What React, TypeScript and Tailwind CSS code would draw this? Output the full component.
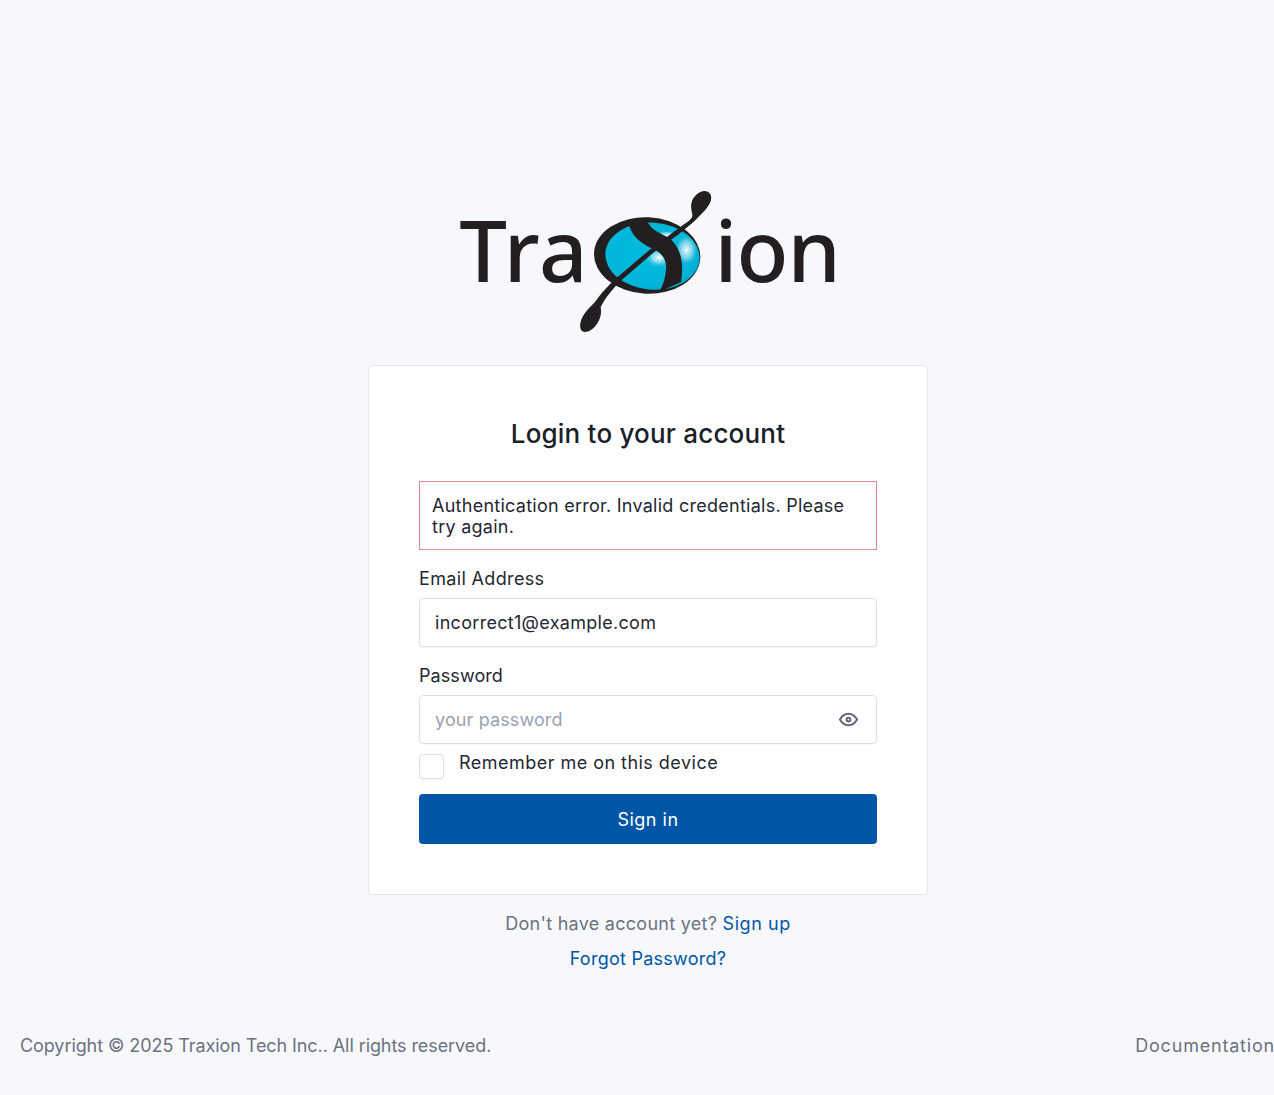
import { TbEye } from "react-icons/tb";

function LogoMark() {
  return (
    <svg viewBox="30 15 400 430" className="-ml-[9px] h-[143px] w-[133px] shrink-0" aria-hidden="true">
      <defs>
        <radialGradient id="globeBase" cx="45%" cy="45%" r="70%">
          <stop offset="0%" stopColor="#00bbdd" />
          <stop offset="70%" stopColor="#00b5d8" />
          <stop offset="100%" stopColor="#0a8fb5" />
        </radialGradient>
        <radialGradient id="shineCenter">
          <stop offset="0%" stopColor="#ffffff" />
          <stop offset="45%" stopColor="#a5e6f2" stopOpacity="0.75" />
          <stop offset="100%" stopColor="#00bbdd" stopOpacity="0" />
        </radialGradient>
        <radialGradient id="shineRight">
          <stop offset="0%" stopColor="#f4fcfe" />
          <stop offset="55%" stopColor="#9adfee" stopOpacity="0.7" />
          <stop offset="100%" stopColor="#19a9cc" stopOpacity="0" />
        </radialGradient>
        <clipPath id="globeClip">
          <ellipse cx="248" cy="214" rx="142" ry="101" transform="rotate(4 248 214)" />
        </clipPath>
      </defs>
      <ellipse cx="232" cy="212" rx="160" ry="115" transform="rotate(3 232 212)" fill="#231f20" />
      <ellipse cx="248" cy="214" rx="142" ry="101" transform="rotate(4 248 214)" fill="url(#globeBase)" />
      <g clipPath="url(#globeClip)">
        <ellipse cx="268" cy="218" rx="48" ry="32" fill="url(#shineCenter)" />
        <ellipse cx="350" cy="195" rx="36" ry="48" fill="url(#shineRight)" />
        <ellipse cx="292" cy="152" rx="36" ry="16" fill="url(#shineRight)" />
      </g>
      <path
        d="M178 122 C190 165 228 182 252 193 C278 206 291 226 289 252 C287 280 279 303 268 322 L334 292 C342 240 336 192 302 162 C276 146 245 138 232 108 Z"
        fill="#231f20"
      />
      <path
        d="M365 55 C372 25 405 8 420 25 C435 45 410 72 392 90 C382 100 378 106 366 116 L322 152 L250 204 L150 290 C130 312 104 340 92 368 C100 400 72 442 45 442 C25 442 26 410 45 385 C56 370 72 358 84 340 C98 320 115 304 130 288 L245 190 L335 124 C350 112 368 104 368 90 C365 75 363 65 365 55 Z"
        fill="#231f20"
      />
    </svg>
  );
}

function Logo() {
  return (
    <div className="flex items-center justify-center pl-[3px] font-['Noto_Sans',sans-serif] text-[85px] leading-[143px] font-medium text-[#231f20]">
      <span className="mt-[-25px] tracking-[1px]">Tra</span>
      <LogoMark />
      <span className="mt-[-25px] ml-[2px] tracking-[-1px]">ion</span>
    </div>
  );
}

export default function App() {
  return (
    <div className="flex min-h-[1095px] flex-col bg-[#f7f8fc] font-['Inter',sans-serif] text-[18px] tracking-[0.2px] text-[#1f2733]">
      <main className="flex flex-col items-center pt-[190px] pl-[22px]">
        <Logo />
        <form className="mt-[32px] flex w-[560px] flex-col rounded-[4px] border border-[#e3e6ed] bg-white p-[50px]">
          <h1 className="mt-[1px] text-center text-[26px] leading-[34px] font-medium tracking-[0.2px] text-[#1a2029]">
            Login to your account
          </h1>
          <div className="mt-[30px] border border-[#e98a92] px-[12px] pt-[13px] pb-[12px] text-[18px] leading-[21px] tracking-[0.26px]">
            Authentication error. Invalid credentials. Please try again.
          </div>
          <label className="mt-[17px] text-[18px] leading-[24px] tracking-[0.35px]">Email Address</label>
          <input
            defaultValue="incorrect1@example.com"
            className="mt-[7px] h-[49px] w-full rounded-[4px] border border-[#dadfe8] bg-white px-[15px] text-[18px] tracking-[0.3px] shadow-[0_1px_1px_rgba(20,30,50,0.04)] outline-none"
          />
          <label className="mt-[17px] text-[18px] leading-[24px] tracking-[0.08px]">Password</label>
          <div className="relative mt-[7px]">
            <input
              type="password"
              placeholder="your password"
              className="h-[49px] w-full rounded-[4px] border border-[#dadfe8] bg-white px-[15px] text-[18px] tracking-[0.12px] shadow-[0_1px_1px_rgba(20,30,50,0.04)] outline-none placeholder:text-[#98a2b3]"
            />
            <TbEye className="absolute top-[13px] right-[17px] h-[23px] w-[23px] text-[#5d6674]" />
          </div>
          <div className="mt-[10px] flex items-start gap-[15px]">
            <input
              type="checkbox"
              className="h-[25px] w-[25px] appearance-none rounded-[4px] border border-[#dadfe8] bg-white shadow-[0_1px_1px_rgba(20,30,50,0.04)]"
            />
            <span className="mt-[-3px] leading-[24px] tracking-[0.47px]">Remember me on this device</span>
          </div>
          <button
            type="button"
            className="mt-[15px] h-[50px] rounded-[4px] bg-[#0056a6] text-center text-[18px] font-normal tracking-[0.5px] text-white"
          >
            Sign in
          </button>
        </form>
        <p className="mt-[17px] text-[18px] leading-[24px] tracking-[0.28px] text-[#6b7280]">
          Don't have account yet? <a className="tracking-[0.55px] text-[#0056a6]">Sign up</a>
        </p>
        <a className="mt-[11px] text-[18px] leading-[24px] tracking-[0.26px] text-[#0056a6]">Forgot Password?</a>
      </main>
      <footer className="mt-[63px] flex items-center justify-between pl-[20px] text-[18px] leading-[24px] text-[#6b7280]">
        <span className="tracking-[-0.08px]">Copyright © 2025 Traxion Tech Inc.. All rights reserved.</span>
        <a className="-mr-[1px] tracking-[0.8px]">Documentation</a>
      </footer>
    </div>
  );
}
